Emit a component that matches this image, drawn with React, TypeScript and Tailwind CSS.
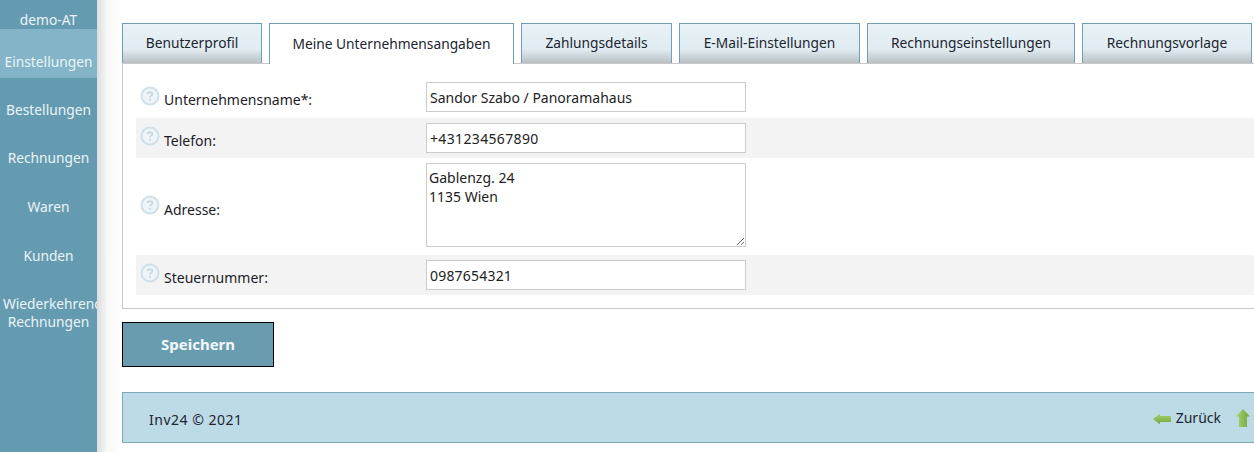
import { useState } from "react";

const navItems = ["Einstellungen", "Bestellungen", "Rechnungen", "Waren", "Kunden"];

const tabs = [
    { label: "Benutzerprofil", width: "w-[140px]" },
    { label: "Meine Unternehmensangaben", width: "w-[245px]", active: true },
    { label: "Zahlungsdetails", width: "w-[151px]" },
    { label: "E-Mail-Einstellungen", width: "w-[181px]" },
    { label: "Rechnungseinstellungen", width: "w-[208px]" },
    { label: "Rechnungsvorlage", width: "w-[170px]" },
];

function HelpIcon() {
    return (
        <svg width="20" height="20" viewBox="0 0 20 20" className="shrink-0">
            <circle cx="10" cy="10" r="8.5" fill="#eef4f7" stroke="#cfe0e8" strokeWidth="2" />
            <path d="M7.5 8 C7.5 5.8 12.5 5.8 12.5 8 C12.5 9.7 10 9.6 10 11.5" fill="none" stroke="#c6d6de" strokeWidth="1.6" />
            <circle cx="10" cy="14" r="1" fill="#c6d6de" />
        </svg>
    );
}

function Row({ label, gray, children, className, labelClass, iconClass }: { label: string; gray?: boolean; children: React.ReactNode; className?: string; labelClass?: string; iconClass?: string }) {
    return (
        <div className={`flex items-center pl-[4px] ${gray ? "bg-[#f3f3f3]" : ""} ${className ?? ""}`}>
            <div className="w-[286px] flex items-center gap-[4px]">
                <span className={iconClass ?? "-mt-[5px]"}><HelpIcon /></span>
                <span className={`text-[14px] text-[#1c1c28] ${labelClass ?? "pt-[5px]"}`}>{label}</span>
            </div>
            {children}
        </div>
    );
}

const inputClass = "w-[320px] h-[30px] border border-[#cccccc] bg-white px-[3px] text-[14px] text-[#222222] outline-none";

export default function App() {
    const [name, setName] = useState("Sandor Szabo / Panoramahaus");
    const [phone, setPhone] = useState("+431234567890");
    const [address, setAddress] = useState("Gablenzg. 24\n1135 Wien");
    const [tax, setTax] = useState("0987654321");

    return (
        <div className="flex h-[452px] w-[1254px] overflow-hidden bg-white font-['Noto_Sans',sans-serif]">
            {/* Sidebar */}
            <div className="w-[97px] shrink-0 bg-[#659bb0] text-[#eaf4f8] text-[13.75px] text-center overflow-hidden">
                <div className="h-[29px] pt-[10px] leading-[20px]">demo-AT</div>
                {navItems.map((item, i) => (
                    <div key={item} className={`h-[48.7px] flex items-center justify-center ${i === 0 ? "bg-[#83b4c7] pt-[18px]" : "pt-[16px]"}`}>
                        {item}
                    </div>
                ))}
                <div className="pt-[23px] leading-[18px] whitespace-nowrap">
                    <div className="text-left pl-[3px]">Wiederkehrende</div>
                    <div>Rechnungen</div>
                </div>
            </div>
            <div className="w-[25px] shrink-0 bg-gradient-to-r from-[#dedcdc] via-[#f8f8f8] via-40% to-white" />

            {/* Main */}
            <div className="w-[1200px] shrink-0 pt-[23px]">
                <div className="flex items-start gap-[7px]">
                    {tabs.map((tab) => (
                        <div
                            key={tab.label}
                            className={`shrink-0 flex items-center justify-center border border-b-0 border-[#6f9fb0] text-[13.75px] text-[#1c2530] ${tab.width} ${
                                tab.active
                                    ? "h-[41px] -mb-px bg-white relative z-10"
                                    : "h-[40px] bg-gradient-to-b from-[#e8f2f7] via-[#e0ecf1] via-65% to-[#b9c0c3]"
                            }`}
                        >
                            {tab.label}
                        </div>
                    ))}
                </div>

                {/* Form panel */}
                <div className="h-[246px] border border-[#c8c8c8] pt-[14px] pl-[13px] flex flex-col">
                    <Row label="Unternehmensname*:" labelClass="pt-[3px]" className="h-[40px]">
                        <input className={`${inputClass} -mt-[2px]`} value={name} onChange={(e) => setName(e.target.value)} />
                    </Row>
                    <Row label="Telefon:" gray className="h-[40px]">
                        <input className={`${inputClass} tracking-[0.35px]`} value={phone} onChange={(e) => setPhone(e.target.value)} />
                    </Row>
                    <Row label="Adresse:" iconClass="-mt-[3px]" className="h-[97px]">
                        <textarea
                            className="w-[320px] h-[84px] -mt-[3px] border border-[#cccccc] bg-white pl-[2px] pr-[3px] py-[4px] text-[14px] leading-[19px] text-[#222222] outline-none"
                            value={address}
                            onChange={(e) => setAddress(e.target.value)}
                        />
                    </Row>
                    <Row label="Steuernummer:" gray className="h-[40px]">
                        <input className={`${inputClass} tracking-[0.2px]`} value={tax} onChange={(e) => setTax(e.target.value)} />
                    </Row>
                </div>

                <button className="mt-[13px] block w-[152px] h-[45px] bg-[#6a9cb0] border border-black text-[15px] font-bold text-[#f2f8fa]">
                    Speichern
                </button>

                {/* Footer */}
                <div className="mt-[25px] h-[51px] w-[1132px] flex items-center justify-between border-t border-l border-b border-[#7fa9b9] bg-[#bddbe7] pl-[26px] pr-[4px] text-[14px] text-[#1c2530]">
                    <span className="pt-[4px] tracking-[0.5px]">Inv24 © 2021</span>
                    <div className="flex items-center">
                        <svg width="18" height="12" viewBox="0 0 18 12" className="mr-[5px] mt-[2px]">
                            <defs>
                                <linearGradient id="arrowLeft" x1="0" y1="0" x2="0" y2="1">
                                    <stop offset="0" stopColor="#a9d46c" />
                                    <stop offset="1" stopColor="#6fa63c" />
                                </linearGradient>
                            </defs>
                            <path d="M0 6 L7 0.5 V3 H18 V9 H7 V11.5 Z" fill="url(#arrowLeft)" />
                        </svg>
                        <span>Zurück</span>
                        <svg width="14" height="18" viewBox="0 0 14 18" className="ml-[15px]">
                            <defs>
                                <linearGradient id="arrowUp" x1="0" y1="0" x2="1" y2="0">
                                    <stop offset="0" stopColor="#a9d46c" />
                                    <stop offset="1" stopColor="#6fa63c" />
                                </linearGradient>
                            </defs>
                            <path d="M7 0 L14 7.5 H11 V18 H3 V7.5 H0 Z" fill="url(#arrowUp)" />
                        </svg>
                    </div>
                </div>
            </div>
        </div>
    );
}
